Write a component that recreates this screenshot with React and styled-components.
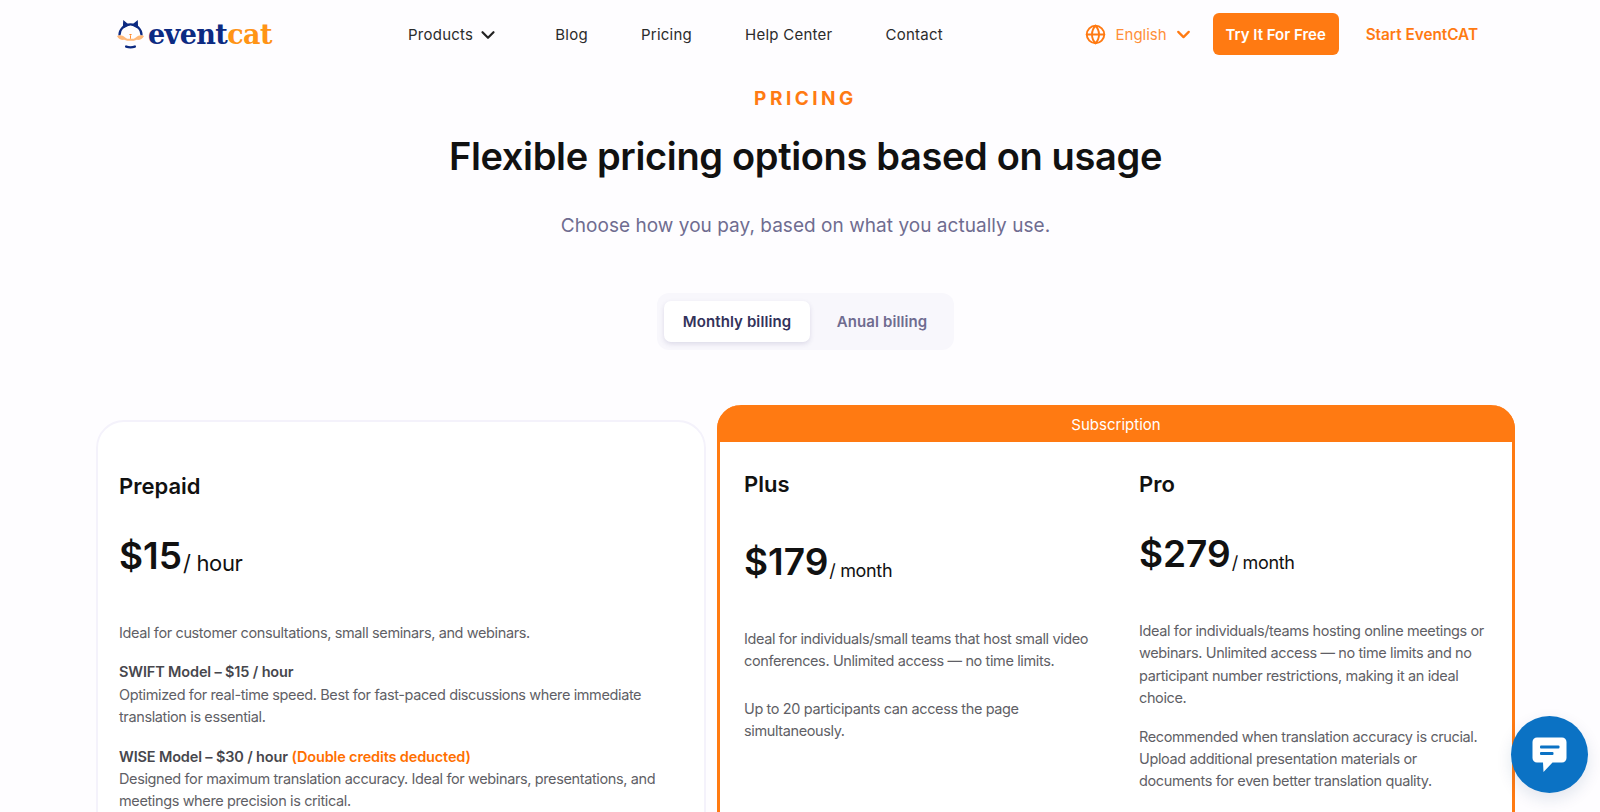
import styled, { createGlobalStyle } from "styled-components";
import { ChevronDown, Globe } from "lucide-react";

const GlobalStyle = createGlobalStyle`
	html, body {
		margin: 0;
		padding: 0;
		background: #fefdff;
		font-family: Inter, "Liberation Sans", sans-serif;
		overflow: hidden;
	}
	* {
		box-sizing: border-box;
	}
`;

const Page = styled.div`
	width: 1600px;
	height: 812px;
	overflow: hidden;
`;

const Header = styled.header`
	display: flex;
	align-items: center;
	height: 68px;
	padding: 0 122px 0 116px;
`;

const Logo = styled.div`
	display: flex;
	align-items: center;
	gap: 3px;
	width: 292px;
	font-family: "DejaVu Serif", serif;
	font-weight: 700;
	font-size: 27px;
	letter-spacing: -0.6px;
	color: #0c2a82;

	span {
		color: #ff9416;
	}
`;

const Nav = styled.nav`
	display: flex;
	align-items: center;
	gap: 53px;
	flex: 1;
`;

const NavItem = styled.a`
	display: flex;
	align-items: center;
	gap: 4px;
	padding-top: 1px;
	font-size: 15px;
	letter-spacing: 0.25px;
	color: #2b2b2b;

	svg {
		margin-right: 3px;
	}
`;

const Actions = styled.div`
	display: flex;
	align-items: center;
`;

const Language = styled.div`
	display: flex;
	align-items: center;
	gap: 10px;
	padding-top: 1px;
	font-size: 15px;
	color: #ff8f38;
	margin-right: 19px;

	svg {
		color: #ff7a12;
	}

	svg:last-child {
		margin-left: -4px;
	}
`;

const TryButton = styled.button`
	width: 126px;
	height: 42px;
	border: none;
	border-radius: 6px;
	background: #ff7a12;
	color: #fff;
	font-family: inherit;
	font-size: 15px;
	font-weight: 600;
`;

const StartLink = styled.a`
	margin-left: 27px;
	font-size: 15.3px;
	font-weight: 600;
	color: #ff7a12;
`;

const Intro = styled.section`
	display: flex;
	flex-direction: column;
	align-items: center;
	padding-left: 11px;
`;

const Eyebrow = styled.div`
	margin-top: 19px;
	font-size: 19px;
	line-height: 24px;
	font-weight: 700;
	letter-spacing: 3.5px;
	color: #ff7a12;
`;

const Title = styled.h1`
	margin: 20px 0 0;
	font-size: 38px;
	line-height: 50px;
	font-weight: 600;
	letter-spacing: -0.35px;
	color: #111;
`;

const Subtitle = styled.p`
	margin: 32px 0 0;
	font-size: 19px;
	line-height: 26px;
	letter-spacing: 0.04px;
	color: #6f6c90;
`;

const Toggle = styled.div`
	display: flex;
	align-items: center;
	width: 297px;
	height: 57px;
	margin-top: 54px;
	padding: 7px 0 7px 7px;
	background: #f8f7fc;
	border-radius: 12px;
`;

const ToggleOption = styled.div`
	display: flex;
	align-items: center;
	justify-content: center;
	height: 41px;
	flex: ${(p) => (p.$active ? "0 0 146px" : "1")};
	border-radius: 7px;
	font-size: 15px;
	font-weight: 600;
	letter-spacing: 0.1px;
	color: ${(p) => (p.$active ? "#33325a" : "#6f6c90")};
	background: ${(p) => (p.$active ? "#fff" : "transparent")};
	box-shadow: ${(p) => (p.$active ? "0 2px 5px rgba(60, 50, 110, 0.14)" : "none")};
`;

const Plans = styled.section`
	display: flex;
	align-items: flex-start;
	gap: 11px;
	margin-top: 55px;
	padding-left: 96px;
`;

const PrepaidCard = styled.article`
	width: 610px;
	height: 500px;
	margin-top: 15px;
	padding: 50px 21px 0;
	border: 2px solid #f4f2fb;
	border-radius: 28px;
	background: #fff;
`;

const SubscriptionCard = styled.article`
	width: 798px;
	height: 500px;
	border: 3px solid #ff7a12;
	border-top: none;
	border-radius: 24px 24px 0 0;
	background: #fff;
`;

const SubscriptionBar = styled.div`
	height: 37px;
	margin: 0 -3px;
	border-radius: 24px 24px 0 0;
	background: #ff7a12;
	color: #fff;
	font-size: 15px;
	line-height: 39px;
	text-align: center;
`;

const Columns = styled.div`
	display: grid;
	grid-template-columns: 395px 1fr;
	padding: 28px 24px 0;
`;

const PlanName = styled.h2`
	margin: 0;
	font-size: 22px;
	line-height: 28px;
	font-weight: 600;
	color: #111;
`;

const Price = styled.div`
	display: flex;
	align-items: baseline;
	gap: 1px;
	margin-top: ${(p) => p.$top}px;
	font-size: 37px;
	line-height: 50px;
	font-weight: 600;
	color: #111;

	small {
		font-size: ${(p) => p.$unit}px;
		font-weight: 400;
		letter-spacing: -0.35px;
		transform: translateY(2px);
	}
`;

const Description = styled.div`
	margin-top: ${(p) => p.$top}px;
	font-size: 14.5px;
	line-height: 22.4px;
	letter-spacing: -0.38px;
	color: #5f5f66;

	p {
		margin: 0 0 ${(p) => p.$gap}px;
	}

	b {
		font-weight: 600;
		letter-spacing: -0.15px;
		color: #47474d;
	}

	em {
		font-style: normal;
		font-weight: 600;
		letter-spacing: -0.15px;
		color: #ff6f00;
	}
`;

const ChatButton = styled.button`
	position: fixed;
	left: 1511px;
	top: 716px;
	display: flex;
	align-items: center;
	justify-content: center;
	width: 77px;
	height: 77px;
	padding: 0;
	border: none;
	border-radius: 50%;
	background: #0b72c4;
	box-shadow: 0 6px 16px rgba(20, 60, 110, 0.12);
`;

const LogoMark = () => (
	<svg width="29" height="30" viewBox="0 0 30 31" fill="none">
		<path d="M7 10 L7.5 1 L14 6.5 Z" fill="#0c2a82" />
		<path d="M23 10 L22.5 1 L16 6.5 Z" fill="#0c2a82" />
		<path d="M3.5 17A11.5 11.5 0 0 1 26.5 17" stroke="#0c2a82" strokeWidth="2.2" />
		<path
			d="M1 17.5c3-1.500 6-.5 8.500 1.500l2 1.500h7l2-1.500c2.500-2 5.500-3 8.500-1.500-1.500 3-4.500 4.500-7.500 4l-3 1h-7l-3-1c-3 .5-6-1-7.500-4z"
			fill="#ffb878"
		/>
		<path d="M13.5 15.5h3L15 17.5z M14.5 17.5h1v3h-1z" fill="#ff8a2b" />
		<path d="M10.5 28.5c3 1 6 1 9 0" stroke="#0c2a82" strokeWidth="2.4" strokeLinecap="round" />
	</svg>
);

const ChatIcon = () => (
	<svg width="35" height="36" viewBox="0 0 35 36">
		<path
			d="M5 .5h25a4.500 4.500 0 0 1 4.500 4.500v16a4.500 4.500 0 0 1-4.500 4.500H20.500L11.500 35l-.5-9.500H5A4.500 4.500 0 0 1 .5 21V5A4.500 4.500 0 0 1 5 .5z"
			fill="#fff"
		/>
		<rect x="8" y="8.5" width="19.5" height="3" rx="1" fill="#0b72c4" />
		<rect x="8" y="15" width="13.5" height="3" rx="1" fill="#0b72c4" />
	</svg>
);

export default function App() {
	return (
		<Page>
			<GlobalStyle />
			<Header>
				<Logo>
					<LogoMark />
					<div>
						event<span>cat</span>
					</div>
				</Logo>
				<Nav>
					<NavItem>
						Products <ChevronDown size={22} strokeWidth={2.4} color="#222" />
					</NavItem>
					<NavItem>Blog</NavItem>
					<NavItem>Pricing</NavItem>
					<NavItem>Help Center</NavItem>
					<NavItem>Contact</NavItem>
				</Nav>
				<Actions>
					<Language>
						<Globe size={21} strokeWidth={2.2} />
						English
						<ChevronDown size={21} strokeWidth={2.6} />
					</Language>
					<TryButton>Try It For Free</TryButton>
					<StartLink>Start EventCAT</StartLink>
				</Actions>
			</Header>

			<Intro>
				<Eyebrow>PRICING</Eyebrow>
				<Title>Flexible pricing options based on usage</Title>
				<Subtitle>Choose how you pay, based on what you actually use.</Subtitle>
				<Toggle>
					<ToggleOption $active>Monthly billing</ToggleOption>
					<ToggleOption>Anual billing</ToggleOption>
				</Toggle>
			</Intro>

			<Plans>
				<PrepaidCard>
					<PlanName>Prepaid</PlanName>
					<Price $top={31} $unit={22}>
						$15 <small>/ hour</small>
					</Price>
					<Description $top={36} $gap={17}>
						<p>Ideal for customer consultations, small seminars, and webinars.</p>
						<p>
							<b>SWIFT Model – $15 / hour</b>
							<br />
							Optimized for real-time speed. Best for fast-paced discussions where immediate
							translation is essential.
						</p>
						<p>
							<b>WISE Model – $30 / hour</b> <em>(Double credits deducted)</em>
							<br />
							Designed for maximum translation accuracy. Ideal for webinars, presentations, and
							meetings where precision is critical.
						</p>
					</Description>
				</PrepaidCard>

				<SubscriptionCard>
					<SubscriptionBar>Subscription</SubscriptionBar>
					<Columns>
						<div>
							<PlanName>Plus</PlanName>
							<Price $top={39} $unit={18}>
								$179 <small>/ month</small>
							</Price>
							<Description $top={34} $gap={25}>
								<p>
									Ideal for individuals/small teams that host small video
									<br />
									conferences. Unlimited access — no time limits.
								</p>
								<p>
									Up to 20 participants can access the page
									<br />
									simultaneously.
								</p>
							</Description>
						</div>
						<div>
							<PlanName>Pro</PlanName>
							<Price $top={31} $unit={18}>
								$279 <small>/ month</small>
							</Price>
							<Description $top={34} $gap={16}>
								<p>
									Ideal for individuals/teams hosting online meetings or
									<br />
									webinars. Unlimited access — no time limits and no
									<br />
									participant number restrictions, making it an ideal
									<br />
									choice.
								</p>
								<p>
									Recommended when translation accuracy is crucial.
									<br />
									Upload additional presentation materials or
									<br />
									documents for even better translation quality.
								</p>
							</Description>
						</div>
					</Columns>
				</SubscriptionCard>
			</Plans>

			<ChatButton>
				<ChatIcon />
			</ChatButton>
		</Page>
	);
}
